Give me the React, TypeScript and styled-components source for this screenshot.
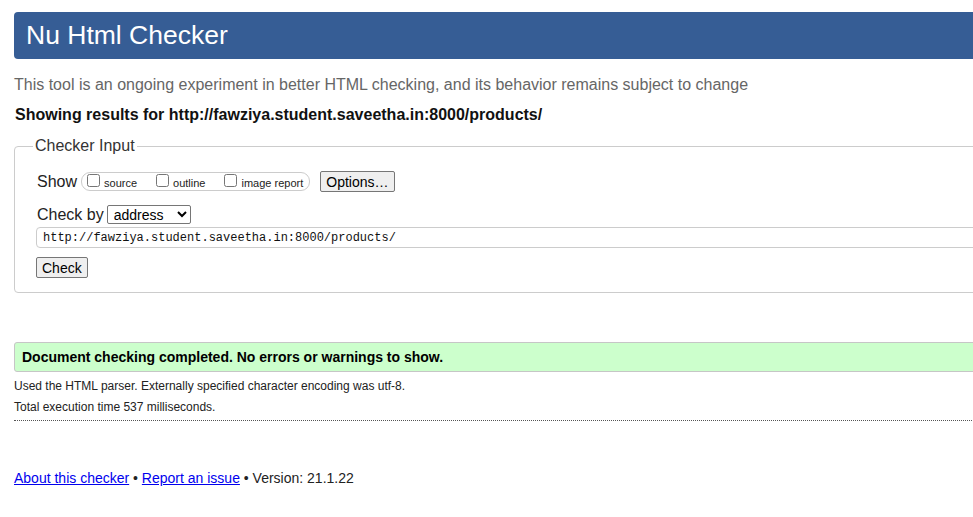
import React from "react";
import styled, { createGlobalStyle } from "styled-components";

const GlobalStyle = createGlobalStyle`
  html, body {
    margin: 0;
    padding: 0;
    overflow: hidden;
    background: #fff;
  }
  body {
    font-family: "Liberation Sans", Arial, sans-serif;
    color: #222;
  }
`;

function App() {
  return (
    <>
      <GlobalStyle />
      <Page>
        <Header>
          <Title>Nu Html Checker</Title>
        </Header>
        <Lead>
          This tool is an ongoing experiment in better HTML checking, and its
          behavior remains subject to change
        </Lead>
        <ResultsFor>
          Showing results for http://fawziya.student.saveetha.in:8000/products/
        </ResultsFor>

        <InputForm>
          <Legend>Checker Input</Legend>
          <Row>
            <FieldLabel>Show</FieldLabel>
            <Pill>
              <Option>
                <Box type="checkbox" />
                source
              </Option>
              <Option>
                <Box type="checkbox" />
                outline
              </Option>
              <Option>
                <Box type="checkbox" />
                image report
              </Option>
            </Pill>
            <Button $left={10} type="button">
              Options…
            </Button>
          </Row>
          <Row $top={12}>
            <FieldLabel>Check by</FieldLabel>
            <Select defaultValue="address">
              <option value="address">address</option>
              <option value="file">file upload</option>
              <option value="textarea">text input</option>
            </Select>
          </Row>
          <UrlInput
            type="text"
            defaultValue="http://fawziya.student.saveetha.in:8000/products/"
          />
          <Button $top={9} type="button">
            Check
          </Button>
        </InputForm>

        <Success>Document checking completed. No errors or warnings to show.</Success>
        <Detail $top={4}>
          Used the HTML parser. Externally specified character encoding was
          utf-8.
        </Detail>
        <Detail>Total execution time 537 milliseconds.</Detail>
        <Rule />

        <Footer>
          <Link href="#about">About this checker</Link> •{" "}
          <Link href="#issue">Report an issue</Link> • Version: 21.1.22
        </Footer>
      </Page>
    </>
  );
}

export default App;

const Page = styled.div`
  width: 1160px;
  padding: 12px 0 0 14px;
  display: flex;
  flex-direction: column;
  align-items: stretch;
`;

const Header = styled.header`
  height: 47px;
  background: #365d95;
  border-radius: 4px;
  display: flex;
  align-items: center;
  padding-left: 12px;
`;

const Title = styled.h1`
  margin: 0;
  font-size: 26.5px;
  font-weight: normal;
  color: #fff;
  line-height: 1;
`;

const Lead = styled.p`
  margin: 16px 0 0;
  font-size: 16px;
  line-height: 20px;
  color: #666;
`;

const ResultsFor = styled.p`
  margin: 10px 0 0 1px;
  font-size: 16px;
  line-height: 20px;
  font-weight: bold;
  color: #111;
`;

const InputForm = styled.fieldset`
  margin: 11px 0 0;
  padding: 5px 20px 14px 21px;
  border: 1px solid #ccc;
  border-radius: 4px;
  min-width: 0;
  display: flex;
  flex-direction: column;
  align-items: flex-start;
`;

const Legend = styled.legend`
  margin-left: -3px;
  padding: 0 2px;
  font-size: 16px;
  line-height: 20px;
  color: #333;
`;

const Row = styled.div<{ $top?: number }>`
  display: flex;
  align-items: center;
  height: 21px;
  margin-top: ${(p) => p.$top ?? 10}px;
  margin-left: 1px;
`;

const FieldLabel = styled.span`
  font-size: 16px;
  color: #222;
  margin-right: 3px;
`;

const Pill = styled.span`
  display: inline-flex;
  align-items: center;
  gap: 19px;
  height: 17px;
  margin-left: 1px;
  padding: 0 6px 0 5px;
  border: 1px solid #ccc;
  border-radius: 9px;
`;

const Option = styled.label`
  display: inline-flex;
  align-items: center;
  gap: 4px;
  font-size: 11px;
  color: #222;
  padding-top: 2px;
`;

const Box = styled.input`
  margin: 0;
  width: 13px;
  height: 13px;
  position: relative;
  top: -2px;
`;

const Button = styled.button<{ $left?: number; $top?: number }>`
  margin: ${(p) => p.$top ?? 0}px 0 0 ${(p) => p.$left ?? 0}px;
  height: 21px;
  padding: 0 5px;
  font-family: "Liberation Sans", Arial, sans-serif;
  font-size: 14px;
  color: #000;
  background: #efefef;
  border: 1px solid #767676;
  border-radius: 2px;
`;

const Select = styled.select`
  width: 84px;
  height: 19px;
  padding: 0 2px;
  font-family: "Liberation Sans", Arial, sans-serif;
  font-size: 14px;
  color: #000;
  background: #fff;
  border: 1px solid #767676;
  border-radius: 2px;
`;

const UrlInput = styled.input`
  box-sizing: border-box;
  align-self: stretch;
  margin: 2px 0 0;
  height: 21px;
  padding: 0 6px;
  font-family: "Liberation Mono", "Courier New", monospace;
  font-size: 12px;
  color: #111;
  border: 1px solid #ccc;
  border-radius: 4px;
  outline: none;
`;

const Success = styled.div`
  margin-top: 49px;
  height: 28px;
  display: flex;
  align-items: center;
  padding-left: 7px;
  background: #ccffcc;
  border: 1px solid #c6c6c6;
  border-radius: 3px;
  font-size: 14px;
  font-weight: bold;
  color: #000;
`;

const Detail = styled.p<{ $top?: number }>`
  margin: ${(p) => p.$top ?? 0}px 0 0;
  font-size: 12px;
  line-height: 21px;
  color: #222;
`;

const Rule = styled.hr`
  margin: 2px 0 0;
  height: 0;
  border: none;
  border-top: 1px dotted #555;
`;

const Footer = styled.p`
  margin: 48px 0 0;
  font-size: 14px;
  line-height: 18px;
  color: #222;
`;

const Link = styled.a`
  color: #0000ee;
  text-decoration: underline;
`;
